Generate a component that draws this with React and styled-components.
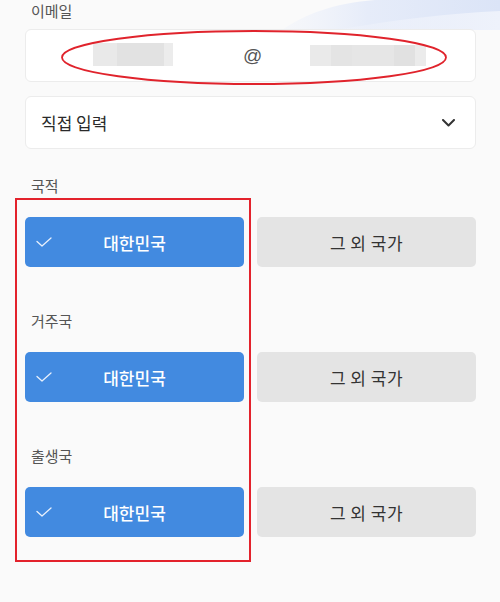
import React from "react";
import styled, { createGlobalStyle } from "styled-components";

const GlobalStyle = createGlobalStyle`
  html, body { margin: 0; padding: 0; background: #fafafa; }
  body { font-family: "Noto Sans CJK KR", "Noto Sans", sans-serif; }
  * { box-sizing: border-box; }
`;

const Page = styled.div`
  position: relative;
  width: 500px;
  height: 602px;
  overflow: hidden;
  padding: 1px 24px 0 25px;
  background: #fafafa;
`;

const Swoosh = styled.svg`
  position: absolute;
  top: 0;
  left: 0;
  z-index: 0;
  pointer-events: none;
`;

const Content = styled.div`
  position: relative;
  z-index: 1;
  display: flex;
  flex-direction: column;
`;

const Label = styled.div`
  font-size: 15px;
  line-height: 20px;
  color: #555;
  padding-left: 6px;
  margin-bottom: ${(p) => p.$mb || 0}px;
`;

const Box = styled.div`
  position: relative;
  height: 53px;
  background: #fff;
  border: 1px solid #ececec;
  border-radius: 6px;
  display: flex;
  align-items: center;
  margin-top: ${(p) => p.$mt || 0}px;
`;

const EmailRow = styled.div`
  display: flex;
  align-items: center;
  padding-left: 67px;
`;

const Mosaic = styled.div`
  width: ${(p) => p.$w}px;
  height: ${(p) => p.$h}px;
  margin-top: ${(p) => p.$dy || 0}px;
  background: ${(p) => p.$bg};
`;

const At = styled.span`
  font-family: "Liberation Sans", "Noto Sans", sans-serif;
  font-size: 19px;
  color: #555;
  margin: 0 48px 0 70px;
  line-height: 1;
`;

const Ellipse = styled.svg`
  position: absolute;
  left: 35px;
  top: 0px;
  overflow: visible;
  pointer-events: none;
`;

const SelectText = styled.span`
  flex: 1;
  padding-left: 15px;
  font-size: 17px;
  color: #2a2a2a;
`;

const Chevron = styled.svg`
  margin-right: 20px;
`;

const Sections = styled.div`
  position: relative;
  margin-top: 27px;
  display: flex;
  flex-direction: column;
  gap: 44px;
`;

const Section = styled.div`
  display: flex;
  flex-direction: column;
`;

const ButtonRow = styled.div`
  display: grid;
  grid-template-columns: 1fr 1fr;
  gap: 13px;
`;

const Choice = styled.div`
  position: relative;
  height: 50px;
  border-radius: 5px;
  display: flex;
  align-items: center;
  justify-content: center;
  font-size: 17px;
  font-weight: ${(p) => (p.$active ? 500 : 400)};
  background: ${(p) => (p.$active ? "#428ae0" : "#e4e4e4")};
  color: ${(p) => (p.$active ? "#ffffff" : "#333")};
  letter-spacing: ${(p) => (p.$active ? "0" : "0.5px")};
`;

const Check = styled.svg`
  position: absolute;
  left: 11px;
  top: 20px;
`;

const Annotation = styled.div`
  position: absolute;
  left: -10px;
  top: 22px;
  width: 236px;
  height: 364px;
  border: 2px solid #e3222c;
  pointer-events: none;
`;

const leftBg =
  "linear-gradient(to right, #e9e9e9 0 24px, #e2e2e2 24px 71px, #ececec 71px 80px)";
const rightBg =
  "linear-gradient(to right, #eaeaea 0 21px, #e4e4e4 21px 42px, #e6e6e6 42px 84px, #e1e1e1 84px 105px, #ebebeb 105px 116px)";

function ChoiceRow() {
  return (
    <ButtonRow>
      <Choice $active>
        <Check width="16" height="10" viewBox="0 0 16 10">
          <polyline
            points="1,4.5 6,9 15,1"
            fill="none"
            stroke="#e8f0fc"
            strokeWidth="1.3"
            strokeLinecap="round"
            strokeLinejoin="round"
          />
        </Check>
        대한민국
      </Choice>
      <Choice>그 외 국가</Choice>
    </ButtonRow>
  );
}

export default function App() {
  const sections = ["국적", "거주국", "출생국"];
  return (
    <>
      <GlobalStyle />
      <Page>
        <Swoosh width="500" height="40" viewBox="0 0 500 40">
          <defs>
            <linearGradient id="sw1" x1="280" y1="0" x2="500" y2="0" gradientUnits="userSpaceOnUse">
              <stop offset="0" stopColor="#eef2fb" stopOpacity="0.3" />
              <stop offset="0.4" stopColor="#e6ecf9" />
              <stop offset="1" stopColor="#dbe4f7" />
            </linearGradient>
            <linearGradient id="sw2" x1="330" y1="0" x2="500" y2="0" gradientUnits="userSpaceOnUse">
              <stop offset="0" stopColor="#f4f6fc" stopOpacity="0.2" />
              <stop offset="1" stopColor="#eef2fb" />
            </linearGradient>
          </defs>
          <path d="M282 30 C305 14 335 3 375 0 L500 0 L500 30 Z" fill="url(#sw1)" />
          <path d="M335 30 C395 20 450 13 500 11 L500 30 Z" fill="url(#sw2)" />
        </Swoosh>
        <Content>
          <Label>이메일</Label>
          <Box $mt={8}>
            <EmailRow>
              <Mosaic $w={80} $h={23} $dy={-2} $bg={leftBg} />
              <At>@</At>
              <Mosaic $w={116} $h={21} $dy={0} $bg={rightBg} />
            </EmailRow>
            <Ellipse width="390" height="56" viewBox="0 0 390 56">
              <ellipse cx="193" cy="27.5" rx="192" ry="26.5" fill="none" stroke="#e0232c" strokeWidth="1.8" />
            </Ellipse>
          </Box>
          <Box $mt={14}>
            <SelectText>직접 입력</SelectText>
            <Chevron width="13" height="8" viewBox="0 0 13 8">
              <polyline
                points="1,1 6.5,6.5 12,1"
                fill="none"
                stroke="#333"
                strokeWidth="2"
                strokeLinecap="round"
                strokeLinejoin="round"
              />
            </Chevron>
          </Box>
          <Sections>
            {sections.map((s) => (
              <Section key={s}>
                <Label $mb={21}>{s}</Label>
                <ChoiceRow />
              </Section>
            ))}
            <Annotation />
          </Sections>
        </Content>
      </Page>
    </>
  );
}
